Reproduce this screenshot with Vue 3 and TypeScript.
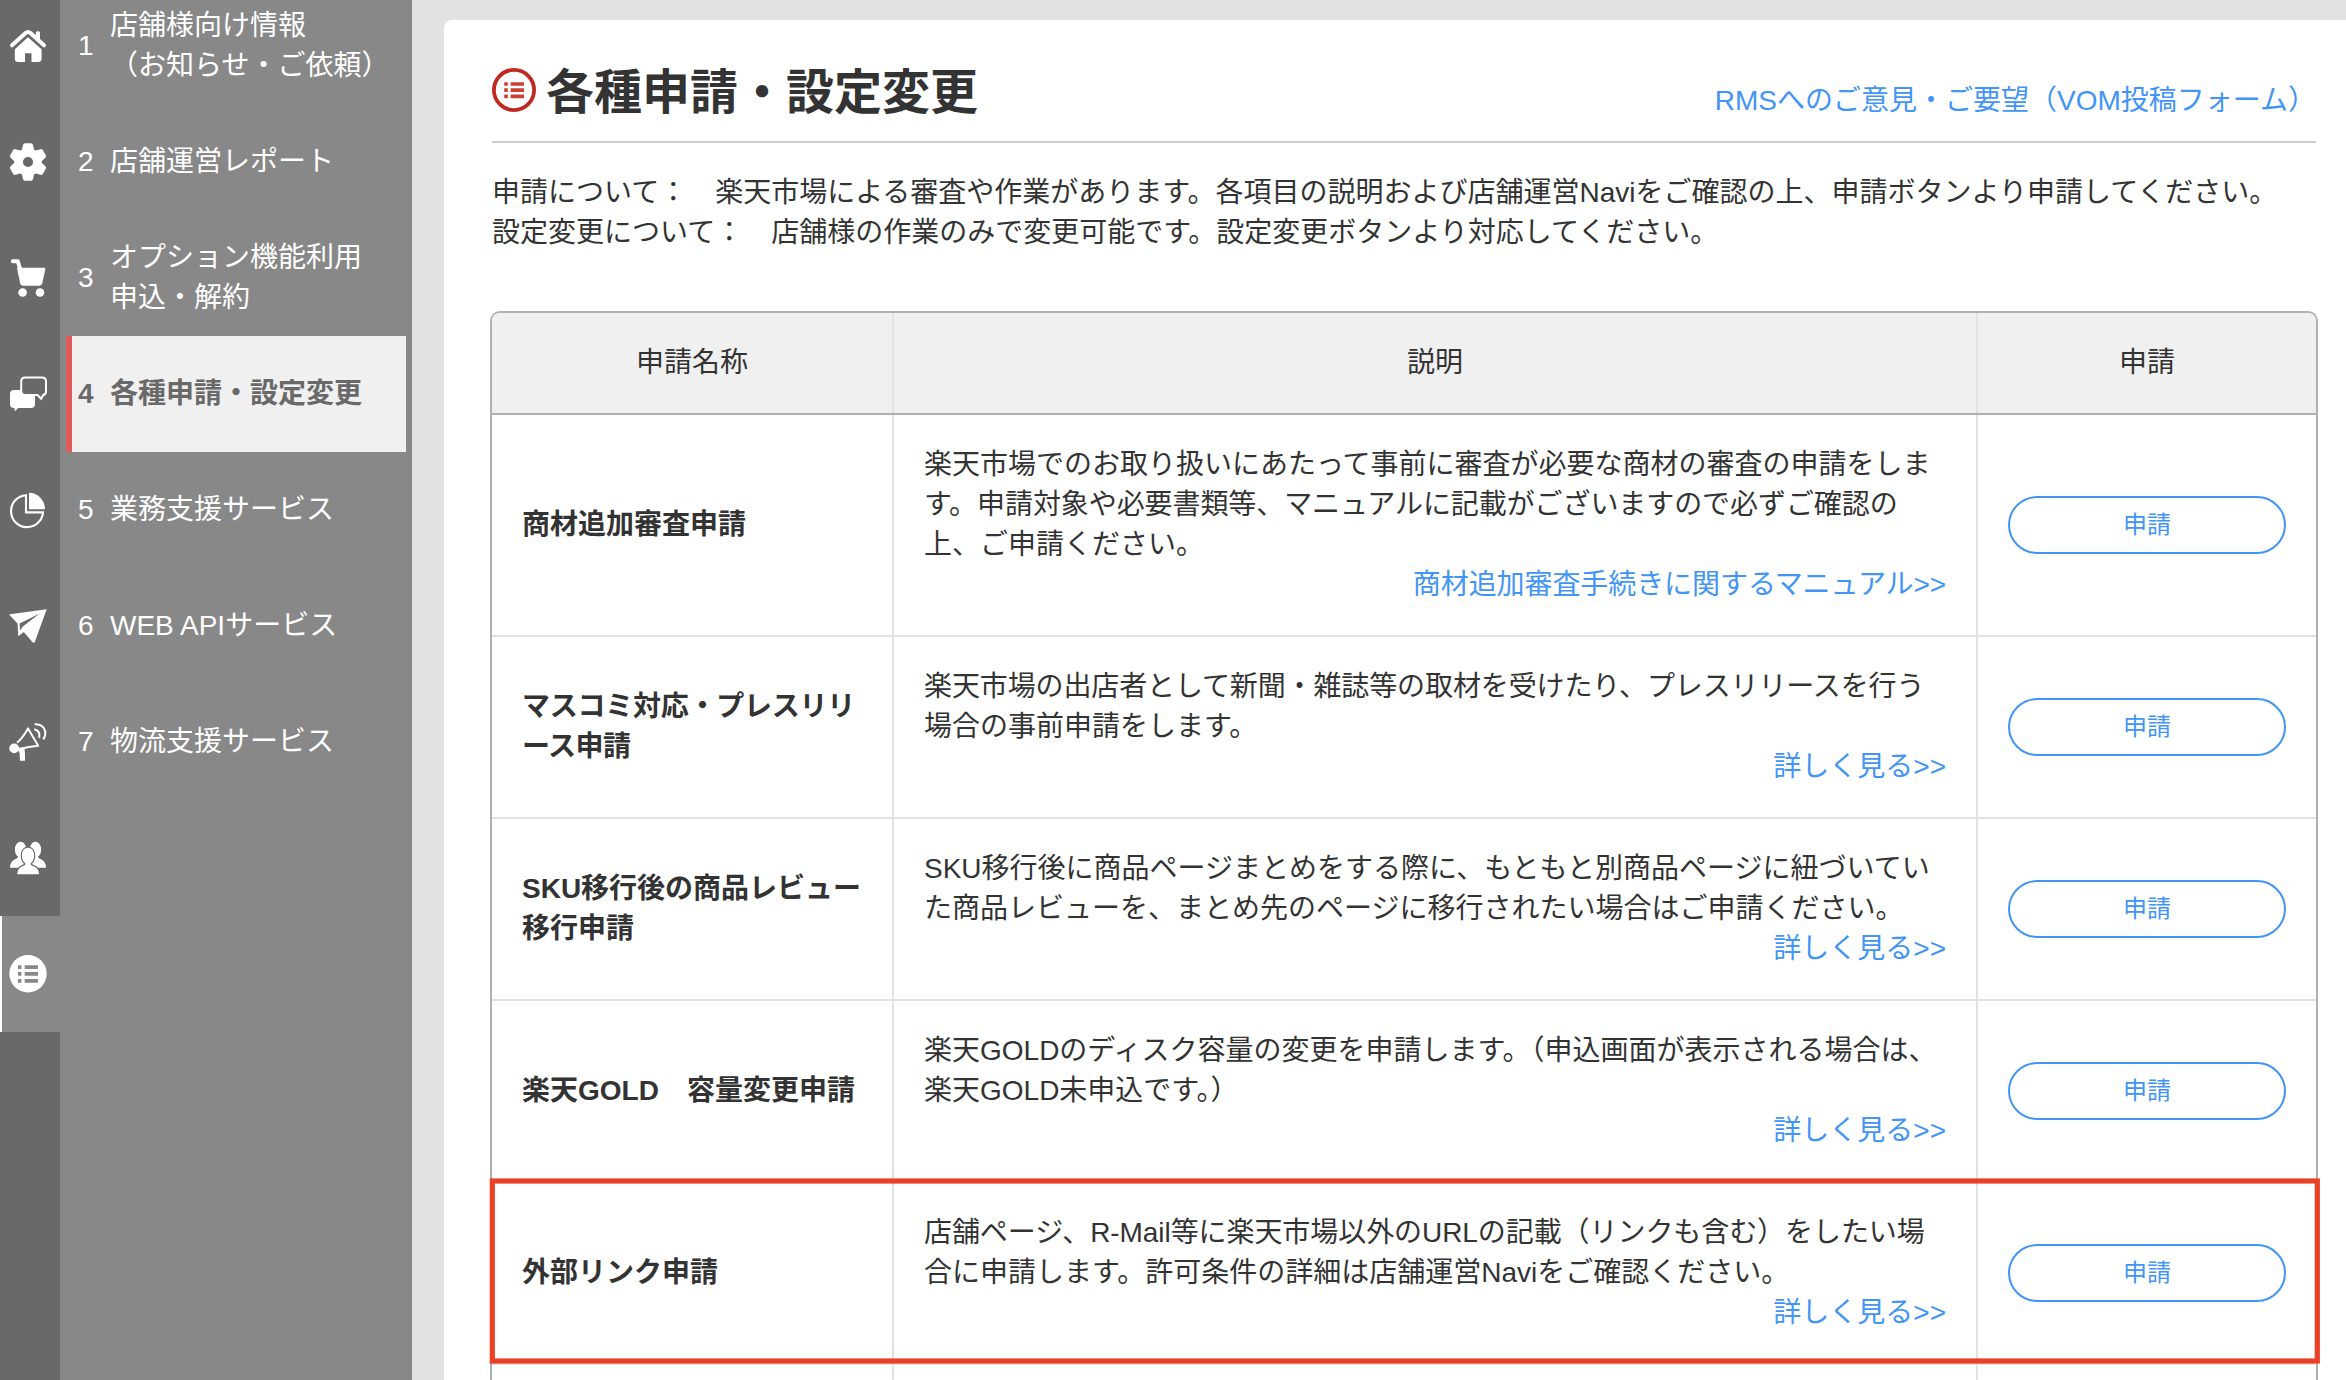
<script setup lang="ts">
interface MenuItem {
  no: number
  lines: string[]
  active?: boolean
}

interface TextLine {
  text: string
  tracking?: number
}

interface RequestRow {
  name: TextLine[]
  desc: TextLine[]
  link: TextLine
  marked?: boolean
}

const railIcons: string[] = ['home', 'gear', 'cart', 'chat', 'pie', 'plane', 'mega', 'people', 'list']

const menu: MenuItem[] = [
  { no: 1, lines: ['店舗様向け情報', '（お知らせ・ご依頼）'] },
  { no: 2, lines: ['店舗運営レポート'] },
  { no: 3, lines: ['オプション機能利用', '申込・解約'] },
  { no: 4, lines: ['各種申請・設定変更'], active: true },
  { no: 5, lines: ['業務支援サービス'] },
  { no: 6, lines: ['WEB APIサービス'] },
  { no: 7, lines: ['物流支援サービス'] },
]

const rows: RequestRow[] = [
  {
    name: [{ text: '商材追加審査申請' }],
    desc: [
      { text: '楽天市場でのお取り扱いにあたって事前に審査が必要な商材の審査の申請をしま' },
      { text: 'す。申請対象や必要書類等、マニュアルに記載がございますので必ずご確認の', tracking: -0.08 },
      { text: '上、ご申請ください。' },
    ],
    link: { text: '商材追加審査手続きに関するマニュアル>>', tracking: -0.08 },
  },
  {
    name: [{ text: 'マスコミ対応・プレスリリ', tracking: -0.25 }, { text: 'ース申請', tracking: -0.5 }],
    desc: [
      { text: '楽天市場の出店者として新聞・雑誌等の取材を受けたり、プレスリリースを行う', tracking: -0.12 },
      { text: '場合の事前申請をします。' },
    ],
    link: { text: '詳しく見る>>' },
  },
  {
    name: [{ text: 'SKU移行後の商品レビュー' }, { text: '移行申請' }],
    desc: [
      { text: 'SKU移行後に商品ページまとめをする際に、もともと別商品ページに紐づいてい' },
      { text: 'た商品レビューを、まとめ先のページに移行されたい場合はご申請ください。' },
    ],
    link: { text: '詳しく見る>>' },
  },
  {
    name: [{ text: '楽天GOLD　容量変更申請' }],
    desc: [
      { text: '楽天GOLDのディスク容量の変更を申請します。（申込画面が表示される場合は、' },
      { text: '楽天GOLD未申込です。）' },
    ],
    link: { text: '詳しく見る>>' },
  },
  {
    name: [{ text: '外部リンク申請' }],
    desc: [
      { text: '店舗ページ、R-Mail等に楽天市場以外のURLの記載（リンクも含む）をしたい場', tracking: -0.07 },
      { text: '合に申請します。許可条件の詳細は店舗運営Naviをご確認ください。' },
    ],
    link: { text: '詳しく見る>>' },
    marked: true,
  },
]

const tracked = (line: TextLine) => (line.tracking ? { letterSpacing: `${line.tracking}px` } : undefined)
</script>

<template>
  <div class="page">
    <nav class="rail">
      <div v-for="icon in railIcons" :key="icon" class="rail-item" :class="{ current: icon === 'list' }">
        <svg width="60" height="60" viewBox="0 0 60 60" fill="#fff">
          <g v-if="icon === 'home'">
            <path d="M12 29.3 25.6 17Q28 15 30.4 17L44 29.3" fill="none" stroke="#fff" stroke-width="4" stroke-linecap="round" />
            <rect x="35.8" y="15.2" width="4.2" height="9.5" rx="1.6" />
            <path d="M28 21.3 14.8 33.2V42.5Q14.8 46 18.3 46H25V37.3H31.5V46H38Q41.6 46 41.6 42.5V33.2Z" />
          </g>
          <g v-else-if="icon === 'gear'">
            <circle cx="28" cy="30" r="9.4" fill="none" stroke="#fff" stroke-width="8.6" />
            <path
              v-for="n in 6"
              :key="n"
              :transform="`rotate(${n * 60} 28 30)`"
              d="M21.5 19.5 23.1 12.8Q23.4 11.2 25 11.2H31Q32.6 11.2 32.9 12.8L34.5 19.5Z"
            />
          </g>
          <g v-else-if="icon === 'cart'">
            <path d="M12.8 13.2H17.8L21 24" fill="none" stroke="#fff" stroke-width="4" stroke-linecap="round" stroke-linejoin="round" />
            <path d="M18 19.7H44Q45.6 19.7 45.3 21.3L42.2 35.6Q41.7 37.7 39.7 37.7H22.8Q20.7 37.7 20.2 35.6L17 20Z" />
            <circle cx="22.6" cy="44.5" r="4.3" />
            <circle cx="40" cy="44.5" r="4.3" />
          </g>
          <g v-else-if="icon === 'chat'">
            <path d="M14 26H31Q35 26 35 30V40Q35 44 31 44H18.2L15 47.3 14.4 44H14Q10 44 10 40V30Q10 26 14 26Z" />
            <path
              d="M25.4 13.4H42Q46 13.4 46 17.4V27Q46 30.6 43.2 31L41.2 34.8 37.5 31H25.4Q21.2 31 21.2 27V17.4Q21.2 13.4 25.4 13.4Z"
              fill="#696969"
              stroke="#fff"
              stroke-width="2"
            />
          </g>
          <g v-else-if="icon === 'pie'">
            <path d="M26 15.2A16 16 0 1 0 43 32.4H26Z" fill="none" stroke="#fff" stroke-width="2.1" />
            <path d="M29 12.7A16.3 16.6 0 0 1 45 29.3H29Z" />
          </g>
          <g v-else-if="icon === 'plane'">
            <path d="M46.7 13.3 10 18.2Q9 18.5 9.7 19.3L17.6 27.6 18.2 39.4Q18.4 40.3 19.2 39.6L23.8 36 32.8 46.4Q33.9 47.3 34.8 46Z" />
            <path d="M39.8 17.4 19.6 27.6 20 34.6 22.8 30.4Z" fill="#696969" />
          </g>
          <g v-else-if="icon === 'mega'">
            <circle cx="14.2" cy="36.4" r="4.9" />
            <path d="M17 30.8Q23 25.5 28 16.4L38.2 33.8Q27 34.6 16.5 38.5" fill="none" stroke="#fff" stroke-width="2" stroke-linejoin="round" />
            <path d="M18.4 35.8 24.4 35Q25.2 42 25 48.7H20Q20 42 18.4 35.8Z" />
            <path d="M34.2 17.2Q40.6 18.6 39.2 26M34.6 12.2Q40.5 11.8 43.8 16 47 21.5 43.3 27.4" fill="none" stroke="#fff" stroke-width="2" />
          </g>
          <g v-else-if="icon === 'people'">
            <ellipse cx="20.6" cy="21.7" rx="5.7" ry="7.9" />
            <ellipse cx="35.4" cy="21.7" rx="5.7" ry="7.9" />
            <path d="M10 39.8Q10 33.5 15.2 31.3 18.5 30.2 18.5 27H37.5Q37.5 30.2 40.8 31.3 46 33.5 46 39.8Z" />
            <path
              d="M28 19.8C23.9 19.8 21.9 23.4 21.9 27.6 21.9 31.6 23.6 34 25.4 35.4 25.7 36.8 24.6 37.3 22.5 38.2 19 39.7 17.3 42 17.3 46.2H39C39 42 37 39.7 33.5 38.2 31.4 37.3 30.3 36.8 30.6 35.4 32.4 34 34.1 31.6 34.1 27.6 34.1 23.4 32.1 19.8 28 19.8Z"
              stroke="#696969"
              stroke-width="2.4"
              paint-order="stroke"
            />
          </g>
          <g v-else>
            <circle cx="28" cy="29.7" r="18.7" />
            <path d="M18 21.2H21.4V25H18ZM24.7 21.2H38V25H24.7ZM18 28H21.4V31.8H18ZM24.7 28H38V31.8H24.7ZM18 35H21.4V38.7H18ZM24.7 35H38V38.7H24.7Z" fill="#888" />
          </g>
        </svg>
      </div>
    </nav>

    <aside class="menu">
      <a v-for="item in menu" :key="item.no" class="menu-item" :class="{ active: item.active }">
        <span class="no">{{ item.no }}</span>
        <span class="label">
          <span v-for="line in item.lines" :key="line" class="line">{{ line }}</span>
        </span>
      </a>
    </aside>

    <main class="card">
      <header class="head">
        <svg class="head-icon" width="44" height="44" viewBox="0 0 44 44">
          <circle cx="22" cy="22" r="20.1" fill="none" stroke="#bf2a20" stroke-width="3.8" />
          <path d="M12.2 14.2H15.8V17.8H12.2ZM18.6 14.2H32V17.8H18.6ZM12.2 20.3H15.8V23.9H12.2ZM18.6 20.3H32V23.9H18.6ZM12.2 26.6H15.8V30.2H12.2ZM18.6 26.6H32V30.2H18.6Z" fill="#cb4038" />
        </svg>
        <h1>各種申請・設定変更</h1>
        <a class="feedback">RMSへのご意見・ご要望（VOM投稿フォーム）</a>
      </header>

      <p class="intro">
        <span class="line">申請について：　楽天市場による審査や作業があります。各項目の説明および店舗運営Naviをご確認の上、申請ボタンより申請してください。</span>
        <span class="line">設定変更について：　店舗様の作業のみで変更可能です。設定変更ボタンより対応してください。</span>
      </p>

      <section class="table">
        <div class="row thead">
          <div class="cell">申請名称</div>
          <div class="cell">説明</div>
          <div class="cell">申請</div>
        </div>
        <div v-for="row in rows" :key="row.name[0].text" class="row">
          <div class="cell name">
            <span v-for="line in row.name" :key="line.text" class="line" :style="tracked(line)">{{ line.text }}</span>
          </div>
          <div class="cell desc">
            <span v-for="line in row.desc" :key="line.text" class="line" :style="tracked(line)">{{ line.text }}</span>
            <a class="more" :style="tracked(row.link)">{{ row.link.text }}</a>
          </div>
          <div class="cell action">
            <button type="button">申請</button>
          </div>
          <svg v-if="row.marked" class="marker" width="1832" height="188" viewBox="0 0 1832 188">
            <rect x="3.3" y="4" width="1825" height="180" fill="none" stroke="#ea4025" stroke-width="5.2" />
          </svg>
        </div>
        <div class="row">
          <div class="cell"></div>
          <div class="cell"></div>
          <div class="cell"></div>
        </div>
      </section>
    </main>
  </div>
</template>

<style>
body {
  margin: 0;
  overflow: hidden;
}
</style>

<style scoped>
* {
  box-sizing: border-box;
}

.page {
  display: flex;
  width: 2346px;
  height: 1380px;
  overflow: hidden;
  background: #e2e2e2;
  color: #333;
  font-family: "Liberation Sans", "Noto Sans CJK JP", sans-serif;
  font-size: 28px;
  line-height: 40px;
}

.line {
  display: block;
  white-space: nowrap;
}

.rail {
  flex: none;
  width: 60px;
  background: #696969;
}

.rail-item {
  display: flex;
  align-items: center;
  height: 116px;
}

.rail-item:first-child,
.menu-item:first-child {
  margin-top: -12px;
}

.rail-item svg {
  display: block;
}

.rail-item.current {
  background: #888;
  box-shadow: inset 2px 0 0 #fff;
}

.menu {
  flex: none;
  width: 352px;
  padding: 0 6px;
  background: #888;
}

.menu-item {
  display: flex;
  align-items: center;
  height: 116px;
  border-left: 6px solid transparent;
  padding-left: 6px;
  color: #fff;
}

.menu-item.active {
  border-left-color: #e15a5a;
  background: #f0f0f0;
  color: #696969;
  font-weight: 700;
}

.no {
  flex: none;
  width: 32px;
}

.card {
  flex: 1;
  margin: 20px 0 0 32px;
  padding: 0 28px 0 46px;
  border-radius: 8px 0 0 0;
  background: #fff;
}

.head {
  display: flex;
  align-items: center;
  height: 123px;
  margin: 0 2px;
  padding-top: 24px;
  border-bottom: 2px solid #cfcfcf;
}

.head-icon {
  flex: none;
  margin-bottom: 5px;
}

h1 {
  flex: 1;
  margin: 0 0 0 10px;
  font-size: 48px;
  line-height: 60px;
  font-weight: 700;
}

.feedback {
  margin-top: 16px;
  color: #4295f5;
}

.intro {
  margin: 30px 2px 58px;
}

.table {
  border: 2px solid #b0b0b0;
  border-radius: 10px 10px 0 0;
  height: 1200px;
}

.row {
  position: relative;
  display: grid;
  grid-template-columns: 402px 1084px 338px;
  min-height: 182px;
  border-bottom: 2px solid #e2e2e2;
}

.thead {
  min-height: 0;
  height: 102px;
  border-bottom-color: #b0b0b0;
  border-radius: 8px 8px 0 0;
  background: #f0f0f0;
}

.cell {
  display: flex;
  flex-direction: column;
  justify-content: center;
  padding: 30px;
  border-right: 2px solid #e2e2e2;
}

.cell:nth-child(3) {
  border-right: none;
}

.thead .cell {
  align-items: center;
}

.name {
  font-weight: 700;
}

.more {
  align-self: flex-end;
  color: #4295f5;
}

button {
  height: 58px;
  padding: 0;
  border: 2px solid #4295f5;
  border-radius: 29px;
  background: #fff;
  color: #4295f5;
  font: inherit;
  font-size: 24px;
}

.marker {
  position: absolute;
  left: -3px;
  top: -6px;
}
</style>
